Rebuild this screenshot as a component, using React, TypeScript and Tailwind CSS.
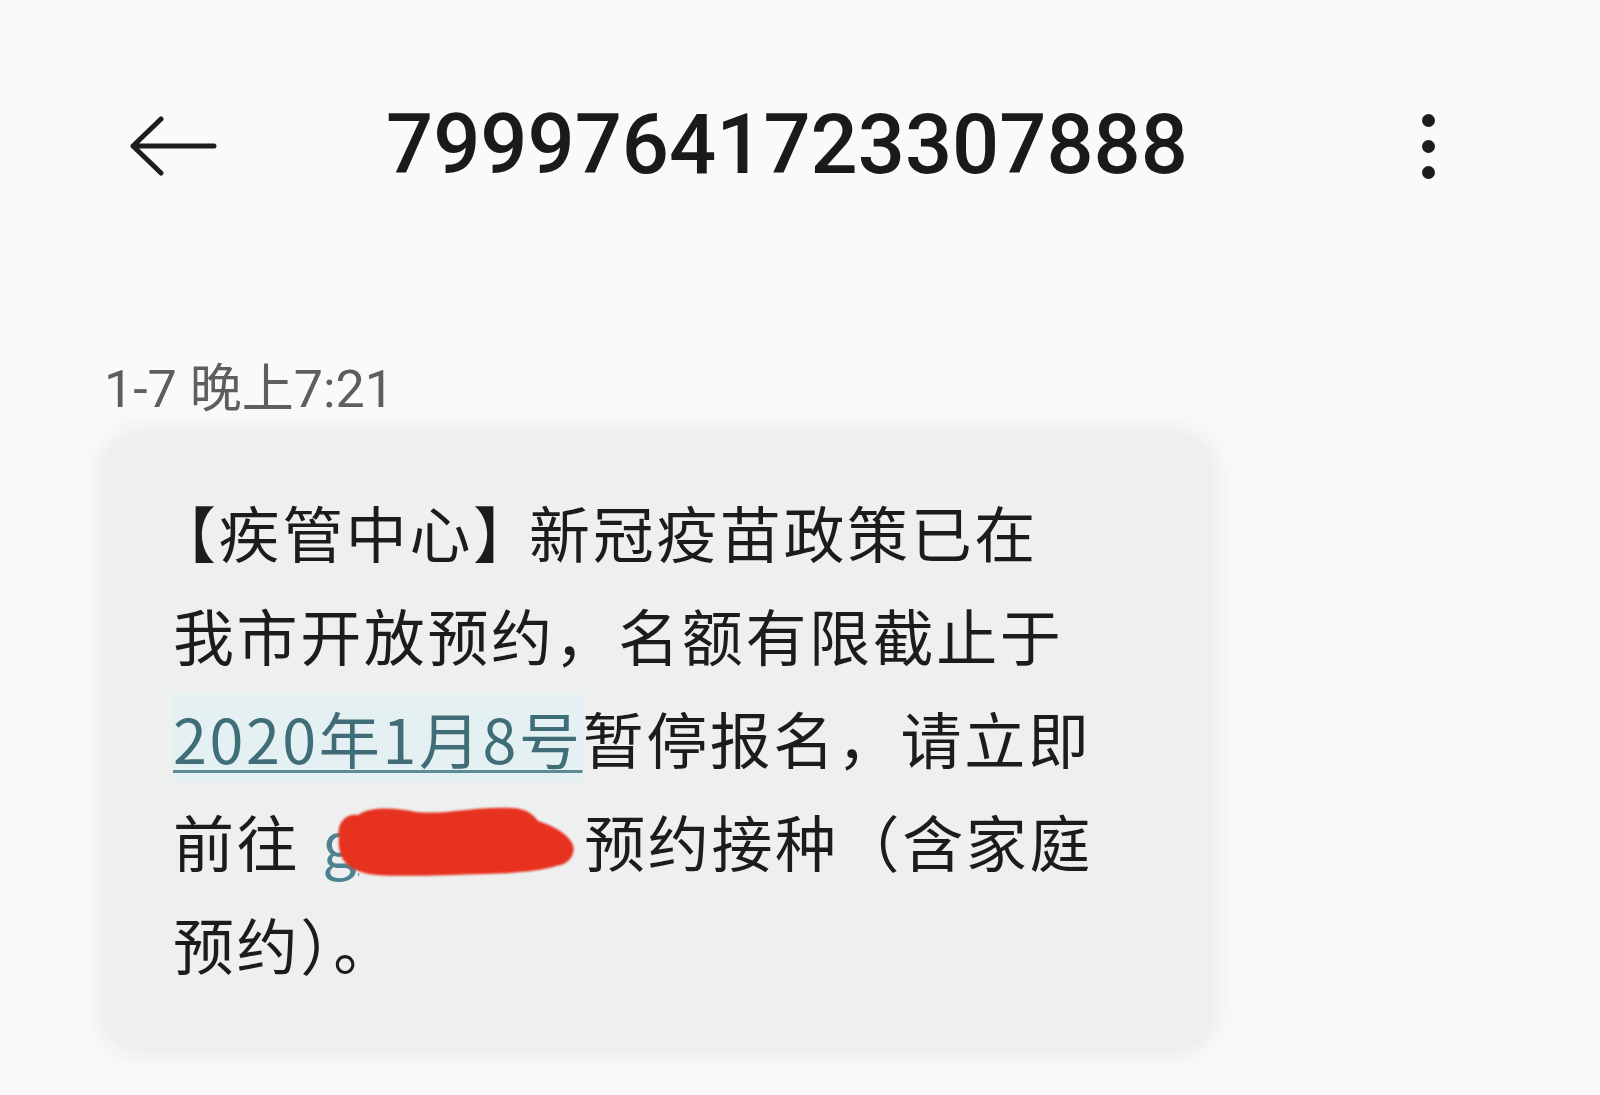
import React from "react";

const bodyFont = {
  fontFamily: '"Noto Sans CJK SC", "Noto Sans", sans-serif',
};

// back arrow drawn to the same proportions as the system one
const BackArrow = () => (
  <svg width="88" height="60" viewBox="0 0 88 60" fill="none" className="shrink-0">
    <path
      d="M4 30 H85 M32 3 L4 30 L32 57"
      stroke="#1d1d1d"
      strokeWidth="5"
      strokeLinecap="round"
      strokeLinejoin="round"
    />
  </svg>
);

// red marker scribble over the link
const Scribble = () => (
  <svg
    width="242"
    height="78"
    viewBox="0 0 242 78"
    className="absolute left-[36px] top-[14px] blur-[0.8px]"
  >
    <path
      d="M3 35 C 0 20, 10 10, 22 12 C 35 3, 60 5, 80 9 C 110 12, 140 3, 175 5 C 190 5, 198 12, 202 18 C 215 22, 232 30, 237 42 C 240 52, 232 62, 220 63 C 205 68, 180 70, 150 71 C 110 72, 70 74, 40 72 C 20 70, 8 62, 5 52 C 3 46, 2 40, 3 35 Z"
      fill="#e7321f"
    />
  </svg>
);

const App: React.FC = () => {
  return (
    <div className="min-h-screen w-full bg-[#f9faf9] text-[#1c1c1c] overflow-hidden">
      {/* Header */}
      <div className="h-[292px] flex items-center">
        <div className="ml-[129px]">
          <BackArrow />
        </div>
        <div
          className="ml-[169px] -mt-[4px] text-[83px] leading-none font-medium text-[#1a1a1a]"
          style={{ fontFamily: "Roboto, sans-serif" }}
        >
          79997641723307888
        </div>
        <div className="ml-auto mr-[165px] flex flex-col gap-[13px]">
          <span className="block w-[13px] h-[13px] rounded-full bg-[#1d1d1d]" />
          <span className="block w-[13px] h-[13px] rounded-full bg-[#1d1d1d]" />
          <span className="block w-[13px] h-[13px] rounded-full bg-[#1d1d1d]" />
        </div>
      </div>

      {/* Conversation */}
      <div className="pt-[72px] px-[102px]">
        <div
          className="ml-[2px] text-[52px] leading-none text-[#5e5e5e]"
          style={{ fontFamily: 'Roboto, "Noto Sans CJK SC", sans-serif' }}
        >
          1-7 晚上7:21
        </div>

        <div className="mt-[16px] w-[1112px] rounded-[40px] bg-[#eef0ef] shadow-[0_0_18px_8px_#eef0ef] pl-[71px] pt-[48px] pb-[57px]">
          <div
            className="text-[61px] leading-[103px] tracking-[2.6px] whitespace-nowrap"
            style={bodyFont}
          >
            <div className="-ml-[18px]">
              【疾管中心<span className="tracking-[-5px]">】</span>新冠疫苗政策已在
            </div>
            <div>我市开放预约，名额有限截止于</div>
            <div>
              <span className="text-[#3f6d78] bg-[#e4f0f2] underline decoration-[#5d8c96] decoration-[3px] underline-offset-[6px]">
                2020年1月8号
              </span>
              暂停报名，请立即
            </div>
            <div>
              前往
              <span className="relative inline-block w-[284px] align-top">
                <span className="pl-[22px] text-[#4f8290] underline decoration-[#6a97a1] decoration-[3px] underline-offset-[6px]">
                  g
                </span>
                <Scribble />
              </span>
              预约接种（含家庭
            </div>
            <div>预约）。</div>
          </div>
        </div>
      </div>
    </div>
  );
};

export default App;
